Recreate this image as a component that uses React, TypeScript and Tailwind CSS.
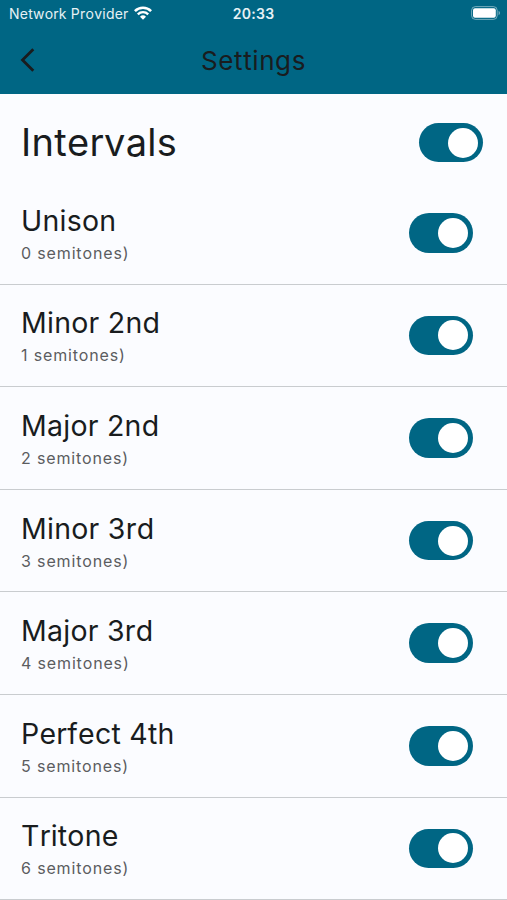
import { useState } from "react";

// ===== CONSTANTS =====
const intervals = [
  "Unison",
  "Minor 2nd",
  "Major 2nd",
  "Minor 3rd",
  "Major 3rd",
  "Perfect 4th",
  "Tritone",
];

// ===== SUB-COMPONENTS =====
const Toggle = ({
  on,
  label,
  onClick,
}: {
  on: boolean;
  label: string;
  onClick: () => void;
}) => (
  <button
    type="button"
    role="switch"
    aria-checked={on}
    aria-label={label}
    onClick={onClick}
    className={`flex h-[39.5px] w-[64px] shrink-0 items-center rounded-full px-[5px] ${
      on ? "justify-end bg-[#006684]" : "justify-start bg-[#c0c8cd]"
    }`}
  >
    <span className="size-[30px] rounded-full bg-white" />
  </button>
);

const StatusBar = () => (
  <div className="grid h-[27px] grid-cols-3 items-center pl-[9px] pr-[6px] text-[14px] text-[#e6f1f5]">
    <div className="flex items-center gap-[5px] whitespace-nowrap">
      <span className="tracking-[0.23px]">Network Provider</span>
      <svg viewBox="0 0 18 14" className="mb-[1px] h-[14px] w-[18px] text-white" fill="none" stroke="currentColor">
        <path d="M.9 5.1a11.6 11.6 0 0 1 16.2 0" strokeWidth="2.6" />
        <path d="M3.8 8.3a7.4 7.4 0 0 1 10.4 0" strokeWidth="2.4" />
        <path d="m9 13.8-3-3.1a4.3 4.3 0 0 1 6 0Z" fill="currentColor" stroke="none" />
      </svg>
    </div>
    <span className="-ml-[3px] text-center font-semibold tracking-[0.3px]">20:33</span>
    <svg viewBox="0 0 30 14" className="mb-px h-[14px] w-[30px] justify-self-end" fill="none">
      <rect x="0.6" y="0.6" width="25.6" height="12.8" rx="3.8" stroke="white" strokeOpacity="0.45" />
      <rect x="2" y="2.2" width="22.8" height="9.6" rx="2" fill="white" />
      <path d="M27.6 4.8c1.8.7 1.8 3.7 0 4.4Z" fill="white" fillOpacity="0.5" />
    </svg>
  </div>
);

// ===== MAIN COMPONENT =====
export default function App() {
  const [enabled, setEnabled] = useState(intervals.map(() => true));
  const allOn = enabled.every(Boolean);

  const toggle = (index: number) =>
    setEnabled(enabled.map((value, i) => (i === index ? !value : value)));

  return (
    <div className="h-[900px] overflow-hidden bg-[#fbfcff] font-[Inter,sans-serif] text-[#191c1e] [font-kerning:none]">
      <header className="h-[94px] bg-[#006684]">
        <StatusBar />
        <div className="grid h-[65px] grid-cols-[56px_1fr_56px] items-center">
          <button type="button" aria-label="Back" className="pl-[19px]">
            <svg viewBox="0 0 16 26" className="h-[26px] w-[16px]" fill="none" stroke="currentColor">
              <path d="M14.3 2.2 3.5 13l10.8 10.8" strokeWidth="2.8" />
            </svg>
          </button>
          <h1 className="pt-[2px] text-center text-[26px] leading-none tracking-[0.6px]">Settings</h1>
        </div>
      </header>

      {/* Section header */}
      <div className="flex h-[88px] items-center justify-between pl-[21px] pr-[24px] pt-[9px]">
        <h2 className="pb-[2px] text-[38px] leading-none tracking-[0.3px]">Intervals</h2>
        <Toggle on={allOn} label="Intervals" onClick={() => setEnabled(intervals.map(() => !allOn))} />
      </div>

      {/* Interval list */}
      <ul>
        {intervals.map((name, index) => (
          <li
            key={name}
            className="flex h-[102.6px] items-center justify-between border-b border-[#c9cccf] pl-[21px] pr-[34px]"
          >
            <div className="pt-[2px]">
              <div className="text-[28.5px] leading-[36px] tracking-[0.25px]">{name}</div>
              <div className="mt-[2px] text-[16px] leading-[24px] tracking-[0.85px] text-[#5b5d5f]">
                {index} semitones)
              </div>
            </div>
            <Toggle on={enabled[index]} label={name} onClick={() => toggle(index)} />
          </li>
        ))}
      </ul>
    </div>
  );
}
